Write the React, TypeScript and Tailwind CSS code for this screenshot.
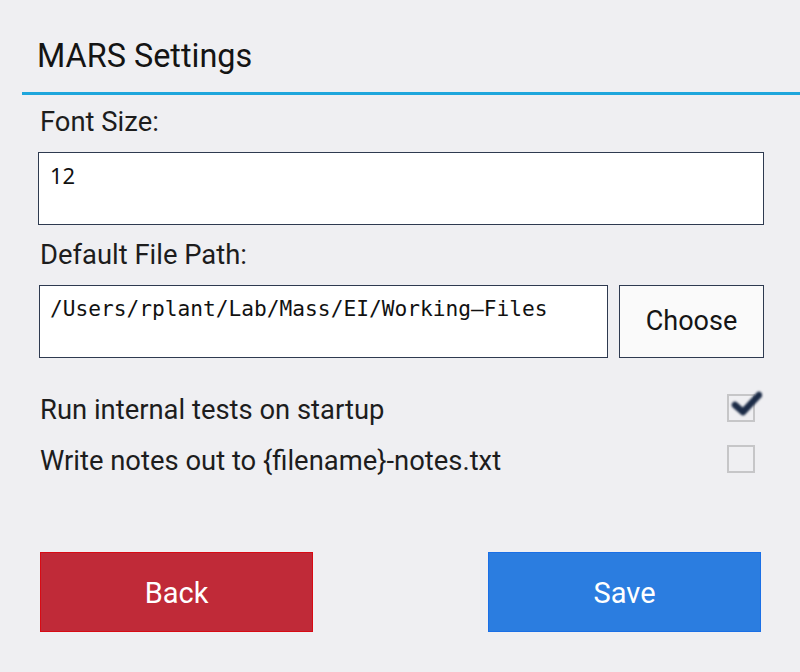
import React, { useState } from 'react';

function CheckBox({ checked, onToggle }: { checked: boolean; onToggle: () => void }) {
  return (
    <button
      type="button"
      onClick={onToggle}
      className="relative w-[28px] h-[28px] border-2 border-[#c6c6c8] bg-transparent shrink-0"
    >
      {checked && (
        <svg
          className="absolute left-[1px] top-[-6px] w-[32px] h-[26px] blur-[0.8px]"
          viewBox="0 0 32 26"
          fill="none"
        >
          <path d="M5 15 L13 22 L29 5" stroke="#1b2b47" strokeWidth="6.5" strokeLinecap="round" strokeLinejoin="round" />
        </svg>
      )}
    </button>
  );
}

export default function App() {
  const [fontSize, setFontSize] = useState("12");
  const [path, setPath] = useState("/Users/rplant/Lab/Mass/EI/Working–Files");
  const [runTests, setRunTests] = useState(true);
  const [writeNotes, setWriteNotes] = useState(false);

  return (
    <div className="w-[800px] h-[672px] bg-[#efeff2] font-['Roboto',sans-serif] text-[#1d1d1d] overflow-hidden">
      {/* Header */}
      <h1 className="pt-[37px] pl-[37px] text-[32.4px] leading-[38px] text-[#141414]">MARS Settings</h1>
      <div className="ml-[22px] mt-[17px] h-[3px] bg-[#1ea6dc]" />

      {/* Font size */}
      <label className="block mt-[11px] pl-[40px] text-[27.4px] leading-[32px]">Font Size:</label>
      <div className="mt-[14px] ml-[38px] w-[726px] h-[73px] border border-[#2e3a50] bg-white">
        <input
          value={fontSize}
          onChange={e => setFontSize(e.target.value)}
          className="w-full pl-[11px] pt-[10px] text-[22px] leading-[24px] font-['Noto_Sans',sans-serif] text-[#111] outline-none bg-transparent"
        />
      </div>

      {/* File path */}
      <label className="block mt-[14px] pl-[40px] text-[27.4px] leading-[32px]">Default File Path:</label>
      <div className="mt-[14px] ml-[39px] flex gap-[11px]">
        <div className="w-[569px] h-[73px] border border-[#2e3a50] bg-white">
          <input
            value={path}
            onChange={e => setPath(e.target.value)}
            className="w-full pl-[10px] pt-[11px] text-[21.2px] leading-[24px] font-['DejaVu_Sans_Mono',monospace] text-[#111] outline-none bg-transparent"
          />
        </div>
        <button
          type="button"
          className="w-[145px] h-[73px] border border-[#2e3a50] bg-[#fafafa] text-[27px] text-[#151515]"
        >
          Choose
        </button>
      </div>

      {/* Options */}
      <div className="mt-[36px] pl-[40px] pr-[45px] flex flex-col gap-[19px]">
        <div className="flex items-start justify-between">
          <span className="text-[27.4px] leading-[32px]">Run internal tests on startup</span>
          <CheckBox checked={runTests} onToggle={() => setRunTests(!runTests)} />
        </div>
        <div className="flex items-start justify-between">
          <span className="text-[27.4px] leading-[32px]">Write notes out to {"{filename}"}-notes.txt</span>
          <CheckBox checked={writeNotes} onToggle={() => setWriteNotes(!writeNotes)} />
        </div>
      </div>

      {/* Actions */}
      <div className="mt-[75px] pl-[40px] pr-[39px] flex justify-between">
        <button
          type="button"
          className="w-[273px] h-[80px] pt-[3px] bg-[#c02a38] border border-[#d80a14] text-white text-[29px]"
        >
          Back
        </button>
        <button
          type="button"
          className="w-[273px] h-[80px] pt-[3px] bg-[#2b7de0] border border-[#1a6fe6] text-white text-[29px]"
        >
          Save
        </button>
      </div>
    </div>
  );
}
